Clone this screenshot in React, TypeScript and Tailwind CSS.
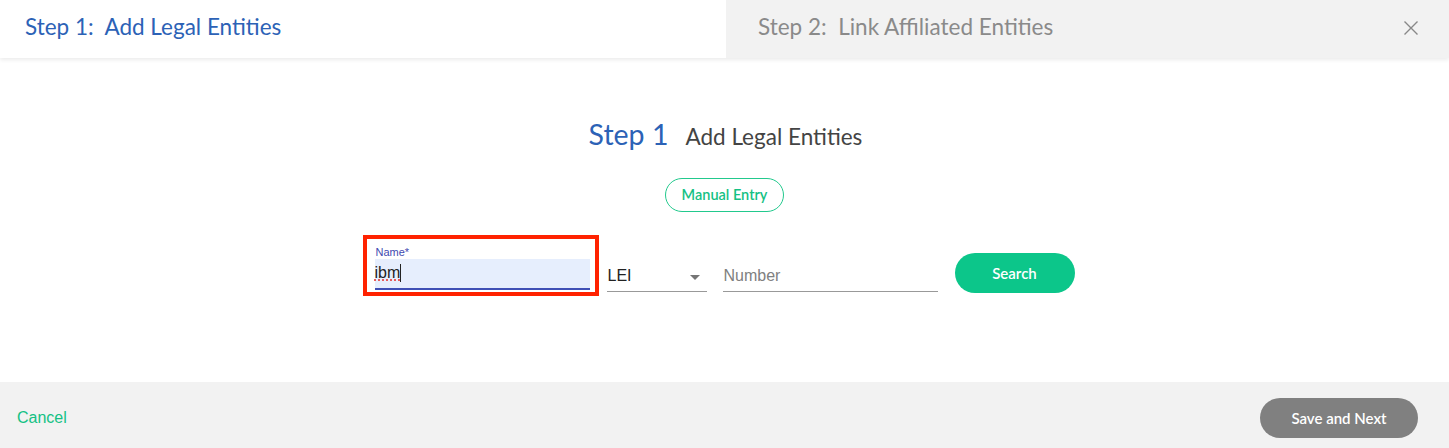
import React from 'react';

const headFont = { fontFamily: 'Lato, "Open Sans", sans-serif' };

const App = () => {
  return (
    <div className="w-[1449px] h-[448px] flex flex-col bg-white overflow-hidden" style={headFont}>
      {/* top tabs */}
      <div className="h-[58px] flex shrink-0 shadow-[0_2px_4px_rgba(0,0,0,0.08)] relative z-10">
        <div className="w-[726px] bg-white flex items-center pl-[25px] pb-[4px] text-[22.5px] text-[#2c62b6] whitespace-pre">
          Step 1:  Add Legal Entities
        </div>
        <div className="flex-1 bg-[#f2f2f2] flex items-center pl-[32px] pr-[30px] pb-[4px] text-[22.5px] text-[#8a8a8a] whitespace-pre">
          <span className="flex-1">Step 2:  Link Affiliated Entities</span>
          <svg width="16" height="16" viewBox="0 0 16 16" className="text-[#888] mt-[2px]">
            <path d="M1.5 1.5 L14.5 14.5 M14.5 1.5 L1.5 14.5" stroke="currentColor" strokeWidth="1.4" />
          </svg>
        </div>
      </div>

      {/* body */}
      <div className="flex-1 flex flex-col items-center pt-[55px]">
        <div className="flex items-baseline gap-[17px] ml-[2px]">
          <span className="text-[28.5px] text-[#2c62b6]">Step 1</span>
          <span className="text-[22.5px] text-[#444]">Add Legal Entities</span>
        </div>
        <button className="mt-[22px] h-[34px] px-[16px] rounded-full border border-[#22c98d] text-[#14c184] text-[14.5px] font-semibold bg-white">
          Manual Entry
        </button>

        <div className="mt-[23px] mr-[12px] flex items-end" style={{ fontFamily: '"Liberation Sans", Arial, sans-serif' }}>
          <div className="w-[236px] h-[61px] border-[4px] border-[#ff2200] pl-[8px] pr-[5px] pt-[6px]">
            <div className="text-[11px] text-[#3f4ab0] leading-[14px] pl-[1px]">Name*</div>
            <div className="h-[31px] bg-[#e6eefd] border-b-2 border-[#3f4fb5] flex items-center text-[16px] text-[#222]">
              <span className="underline decoration-dotted decoration-[#e53935]">ibm</span>
              <span className="w-[1px] h-[18px] bg-[#222]" />
            </div>
          </div>
          <div className="ml-[8px] mb-[4px] w-[100px] h-[30px] border-b border-[#999] flex items-center justify-between text-[16px] text-[#222]">
            <span className="pl-[1px]">LEI</span>
            <svg width="10" height="5" viewBox="0 0 10 5" className="mr-[7px] mt-[2px]">
              <path d="M0 0 L10 0 L5 5 Z" fill="#757575" />
            </svg>
          </div>
          <div className="ml-[16px] mb-[4px] w-[215px] h-[30px] border-b border-[#999] flex items-center text-[16px] text-[#808080] pl-[1px]">
            Number
          </div>
          <button
            className="ml-[17px] mb-[3px] w-[120px] h-[40px] rounded-full bg-[#0cc68a] text-white text-[15px] font-semibold"
            style={headFont}
          >
            Search
          </button>
        </div>
      </div>

      {/* footer */}
      <div className="h-[66px] shrink-0 bg-[#f2f2f2] flex items-center justify-between pl-[17px] pr-[31px] pt-[6px]">
        <span className="text-[16px] text-[#14c184]" style={{ fontFamily: '"Liberation Sans", Arial, sans-serif' }}>
          Cancel
        </span>
        <button className="w-[158px] h-[40px] rounded-full bg-[#808080] text-white text-[15px] font-semibold">
          Save and Next
        </button>
      </div>
    </div>
  );
};

export default App;
